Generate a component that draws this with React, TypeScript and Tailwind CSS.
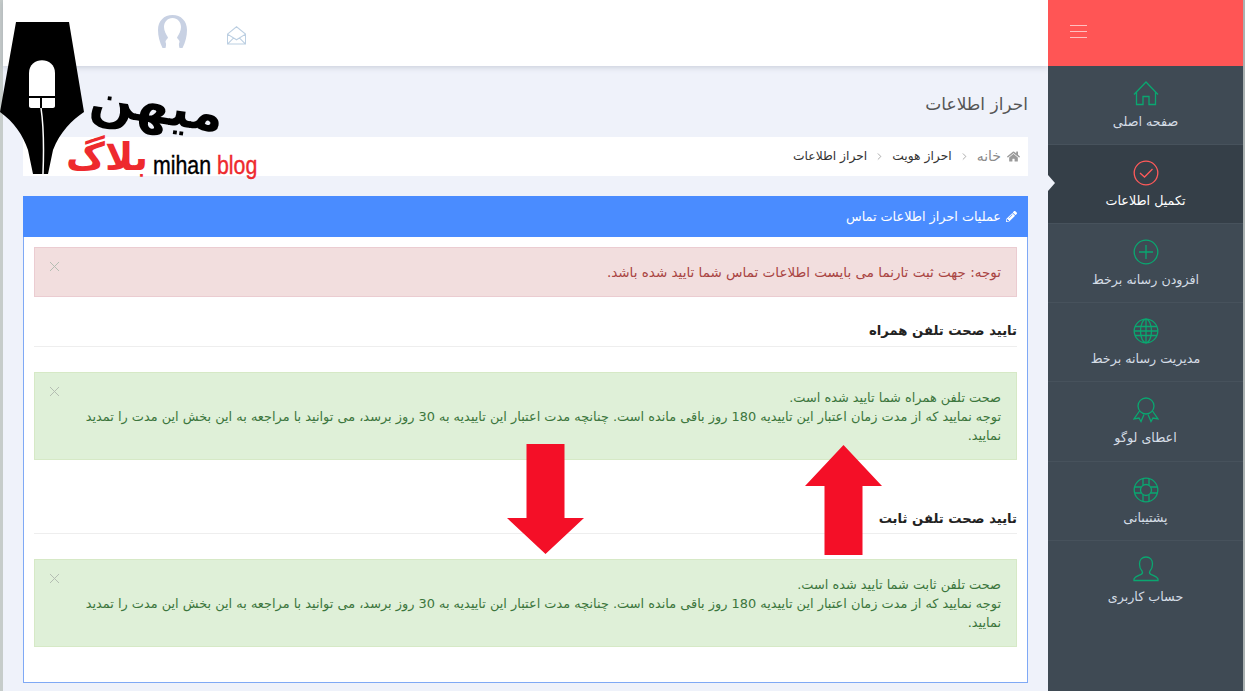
import React from "react";
import { ChevronRight, X } from "lucide-react";
import { FaHome, FaPencilAlt } from "react-icons/fa";

const GREEN = "#0aa770";

const HomeIcon = () => (
  <svg width="26" height="26" viewBox="0 0 26 26" fill="none" stroke={GREEN} strokeWidth="1.3">
    <path d="M1 13.500 13 1l12 12.500M3.500 11v12.500h6.500v-8h6v8h6.500V11" />
  </svg>
);
const CheckIcon = () => (
  <svg width="26" height="26" viewBox="0 0 26 26" fill="none" stroke="#ff5a5a" strokeWidth="1.3">
    <circle cx="13" cy="13" r="11.800" />
    <path d="m7 13 4.500 4L19.500 9" />
  </svg>
);
const PlusIcon = () => (
  <svg width="26" height="26" viewBox="0 0 26 26" fill="none" stroke={GREEN} strokeWidth="1.3">
    <circle cx="13" cy="13" r="11.800" />
    <path d="M13 6v14M6 13h14" />
  </svg>
);
const GlobeIcon = () => (
  <svg width="26" height="26" viewBox="0 0 26 26" fill="none" stroke={GREEN} strokeWidth="1.3">
    <circle cx="13" cy="13" r="11.800" />
    <ellipse cx="13" cy="13" rx="5.500" ry="11.800" />
    <path d="M13 1v24M2 8.500h22M1.200 13h23.600M2 17.500h22" />
  </svg>
);
const AwardIcon = () => (
  <svg width="26" height="26" viewBox="0 0 26 26" fill="none" stroke={GREEN} strokeWidth="1.3">
    <circle cx="13" cy="9" r="8" />
    <path d="M6.500 14 1 22l5-1 2 3.500 3-7M19.500 14l5.500 8-5-1-2 3.500-3-7" />
  </svg>
);
const LifeIcon = () => (
  <svg width="26" height="26" viewBox="0 0 26 26" fill="none" stroke={GREEN} strokeWidth="1.3">
    <circle cx="13" cy="13" r="11.800" />
    <circle cx="13" cy="13" r="5.500" />
    <path d="M10 1.700v6.500M16 1.700v6.500M10 17.800v6.500M16 17.800v6.500M1.700 10h6.500M1.700 16h6.500M17.800 10h6.500M17.800 16h6.500" />
  </svg>
);
const UserIcon = () => (
  <svg width="26" height="26" viewBox="0 0 26 26" fill="none" stroke={GREEN} strokeWidth="1.3">
    <path d="M13 1c-4 0-6.500 3-6.500 7 0 3 1 5.500 2.500 7 .6 1 .5 2.500-.5 3.200C6 19.500 2 20.500 1 23v1.500h24V23c-1-2.500-5-3.500-7.500-4.800-1-.7-1.100-2.200-.5-3.200 1.500-1.500 2.500-4 2.500-7 0-4-2.500-7-6.500-7Z" />
  </svg>
);

const navItems = [
  { label: "صفحه اصلی", icon: <HomeIcon />, h: "h-[79px]" },
  { label: "تکمیل اطلاعات", icon: <CheckIcon />, active: true, h: "h-[79px]" },
  { label: "افزودن رسانه برخط", icon: <PlusIcon />, h: "h-[79px]" },
  { label: "مدیریت رسانه برخط", icon: <GlobeIcon />, h: "h-[79px]" },
  { label: "اعطای لوگو", icon: <AwardIcon />, h: "h-[80px]" },
  { label: "پشتیبانی", icon: <LifeIcon />, h: "h-[79px]" },
  { label: "حساب کاربری", icon: <UserIcon />, h: "h-[79px]", last: true },
];

const Close = () => <X size={17} strokeWidth={1.4} className="absolute left-[11px] top-[10px] text-[#b4bdb2]" />;

const Crumb = () => <ChevronRight size={11} strokeWidth={1.5} className="mx-[7px] text-[#888]" />;

const SuccessAlert = ({ first }: { first: string }) => (
  <div className="relative h-[88px] border border-[#d6e9c6] bg-[#dff0d8] pt-[15px] pr-[15px] pl-[50px] text-[12.9px] leading-[19px] text-[#3c763d]">
    <Close />
    <p>{first}</p>
    <p>
      توجه نمایید که از مدت زمان اعتبار این تاییدیه 180 روز باقی مانده است. چنانچه مدت اعتبار این تاییدیه به 30 روز
      برسد، می توانید با مراجعه به این بخش این مدت را تمدید نمایید.
    </p>
  </div>
);

const Arrow = ({ className, up }: { className: string; up?: boolean }) => (
  <svg className={`absolute ${className}`} width="77" height="110" viewBox="0 0 77 110" fill="#f40f27">
    {up ? <path d="M38.500 0 77 41H57.500v69h-38V41H0Z" /> : <path d="M19.500 0h38v74H77L38.500 110 0 74h19.500Z" />}
  </svg>
);

const MihanLogo = () => (
  <div className="pointer-events-none absolute left-0 top-[22px] h-[160px] w-[262px]">
    <svg className="absolute left-0 top-0" width="90" height="152" viewBox="0 0 90 152">
      <path d="M16 0H69L84 90C72 98 60 110 53 128L48 152H33L28 128C23 113 14 100 0 90Z" fill="#000" />
      <path d="M29 74V51c0-17 26-17 26 0v23Z" fill="#fff" />
      <path d="M29 76h11v10h-9c-1 0-2-1-2-2Zm13 0h13v8c0 1-1 2-2 2H42Z" fill="#fff" />
      <path d="M41 86c3 20 3 40 2 66" fill="none" stroke="#fff" strokeWidth="1.500" />
    </svg>
    <span
      dir="rtl"
      className="absolute left-[90px] top-[60px] rotate-[8deg] whitespace-nowrap font-['DejaVu_Sans',sans-serif] text-[52px] font-bold leading-[46px] text-black"
    >
      میهن
    </span>
    <span
      dir="rtl"
      className="absolute left-[66px] top-[118px] whitespace-nowrap font-['DejaVu_Sans',sans-serif] text-[38px] font-bold leading-[34px] text-[#ee2a2e]"
    >
      بلاگ
    </span>
    <span className="absolute left-[153px] top-[128px] origin-left scale-x-[0.82] whitespace-nowrap font-['Liberation_Sans',sans-serif] text-[26px] leading-[30px] text-black [-webkit-text-stroke:0.4px]">
      mihan <span className="text-[#ee2a2e]">blog</span>
    </span>
  </div>
);

export default function App() {
  return (
    <div className="relative flex h-[691px] w-[1245px] overflow-hidden bg-[#eff2fa] font-['DejaVu_Sans',sans-serif]">
      <div className="w-[3px] shrink-0 bg-[#c6ccca]" />

      <main className="w-[1045px] shrink-0">
        <header className="flex h-[66px] items-center bg-white pl-[155px] shadow-[0_1px_6px_rgba(120,130,150,0.35)]">
          <svg width="29" height="33" viewBox="0 0 29 33" className="-mt-[4px]">
            <path
              d="M14.500 0C6 0 0 6 0 15c0 6 1.500 12 4.500 18h3c.5-2 1-4 0-6-.5-1.500 2-3 2.500-4.500C8 19 6 16 6 12c0-5 3.500-9 8.500-9s8.500 4 8.500 9c0 4-2 7-4 10.500.5 1.500 3 3 2.500 4.500-1 2-.5 4 0 6h3c3-6 4.500-12 4.500-18C29 6 23 0 14.500 0Z"
              fill="#c8d1e3"
            />
          </svg>
          <svg
            width="19"
            height="19"
            viewBox="0 0 20 20"
            fill="none"
            stroke="#bccfe2"
            strokeWidth="1.1"
            className="ml-[40px] mt-[5px]"
          >
            <path d="M.5 8.500 10 .8l9.500 7.700v10.500H.5ZM.5 8.500 10 14.500l9.500-6M.5 19l6.500-6.500M19.500 19 13 12.500" />
          </svg>
        </header>

        <div dir="rtl" className="px-[20px]">
          <h1 className="pt-[24px] text-[17px] leading-[28px] text-[#555]">احراز اطلاعات</h1>

          <nav className="mt-[19px] flex h-[39px] items-center bg-white pr-[8px] text-[12.300px] text-[#333]">
            <FaHome size={13} className="ml-[6px] text-[#9a9a9a]" />
            <span className="text-[14px] text-[#8a8a8a]">خانه</span>
            <Crumb />
            <span>احراز هویت</span>
            <Crumb />
            <span>احراز اطلاعات</span>
          </nav>

          <section className="mt-[20px] h-[487px] border border-[#7fa9f5] bg-white">
            <div className="-m-px flex h-[41px] items-center bg-[#4a8cff] pr-[11px] text-[12.800px] text-white">
              <FaPencilAlt size={11} className="ml-[5px]" />
              عملیات احراز اطلاعات تماس
            </div>

            <div className="px-[10px] pt-[11px]">
              <div className="relative flex h-[50px] items-center border border-[#ebccd1] bg-[#f2dede] pr-[15px] text-[13.500px] text-[#a94442]">
                <Close />
                توجه: جهت ثبت تارنما می بایست اطلاعات تماس شما تایید شده باشد.
              </div>

              <h3 className="mt-[21px] h-[29px] border-b border-[#eeeeee] text-[13.200px] font-bold leading-[26px] text-[#222]">
                تایید صحت تلفن همراه
              </h3>
              <div className="mt-[25px]">
                <SuccessAlert first="صحت تلفن همراه شما تایید شده است." />
              </div>

              <h3 className="mt-[46px] h-[28px] border-b border-[#eeeeee] text-[13.200px] font-bold leading-[26px] text-[#222]">
                تایید صحت تلفن ثابت
              </h3>
              <div className="mt-[25px]">
                <SuccessAlert first="صحت تلفن ثابت شما تایید شده است." />
              </div>
            </div>
          </section>
        </div>
      </main>

      <aside dir="rtl" className="relative w-[195px] shrink-0 bg-[#3f4a54]">
        <div className="flex h-[66px] items-center bg-[#ff5555] pr-[156px]">
          <div className="-mt-[4px] flex w-[17px] flex-col gap-[5px]">
            <span className="h-px bg-[#ffc0c0]" />
            <span className="h-px bg-[#ffc0c0]" />
            <span className="h-px bg-[#ffc0c0]" />
          </div>
        </div>
        {navItems.map((item) => (
          <div
            key={item.label}
            className={`flex ${item.h} flex-col items-center pt-[15px] text-[12.700px] ${
              item.last ? "" : "border-b border-[#47525c]"
            } ${item.active ? "bg-[#353f48] text-white" : "text-[#d5dde6]"}`}
          >
            {item.icon}
            <span className="mt-[5px] leading-[20px]">{item.label}</span>
          </div>
        ))}
        <span className="absolute left-0 top-[175px] h-0 w-0 border-y-[8px] border-l-[7px] border-y-transparent border-l-[#eff2fa]" />
      </aside>

      <div className="w-[2px] shrink-0 bg-[#a9b0b0]" />

      <Arrow className="left-[805px] top-[445px]" up />
      <Arrow className="left-[507px] top-[444px]" />
      <MihanLogo />
    </div>
  );
}
